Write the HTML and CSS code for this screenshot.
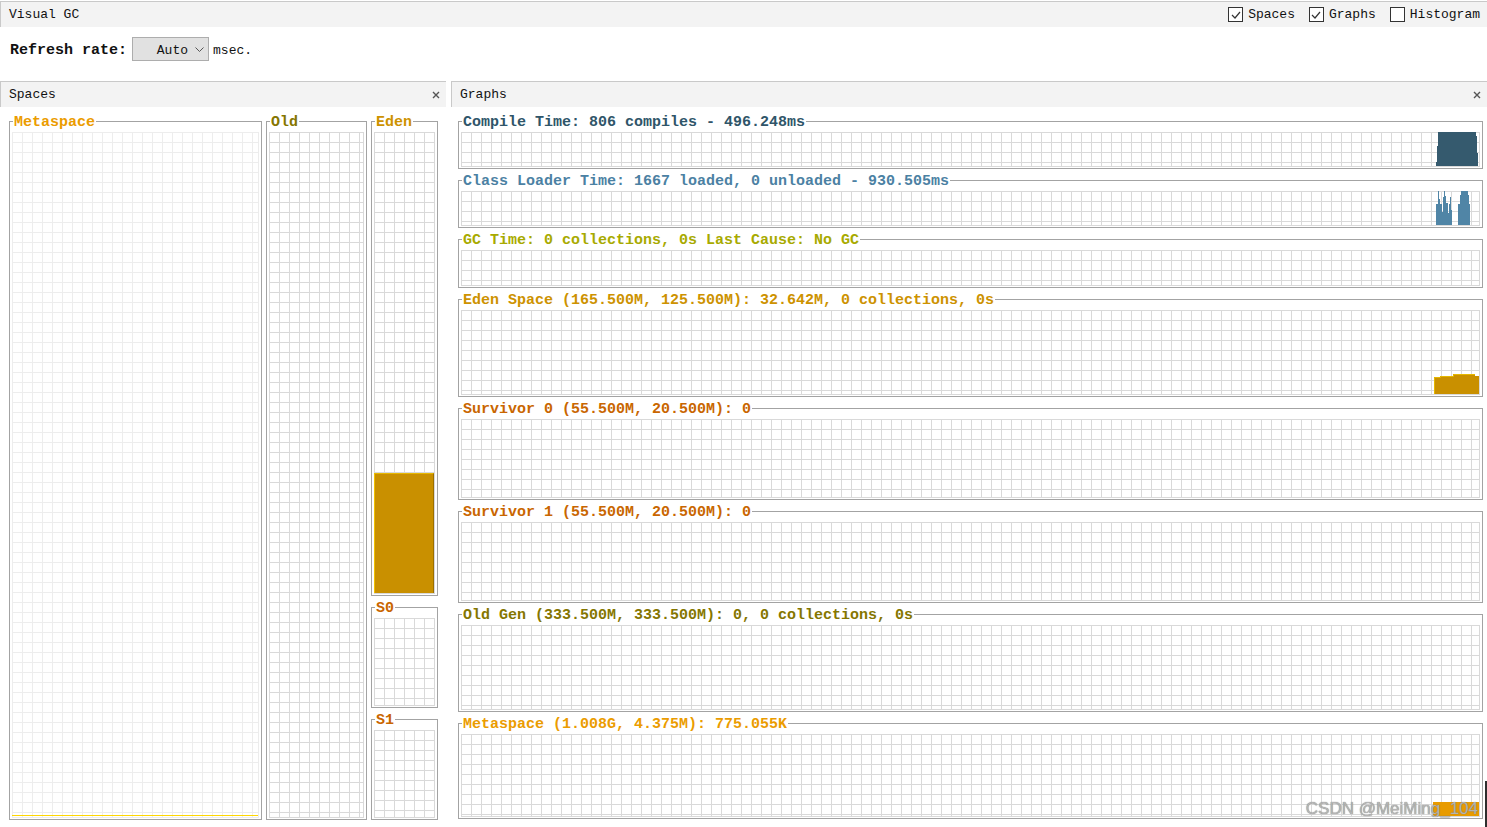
FILE: index.html
```html
<!DOCTYPE html>
<html>
<head>
<meta charset="utf-8">
<title>Visual GC</title>
<link rel="stylesheet" href="styles.css">
</head>
<body>
<div class="app">
  <div class="topbar">
    <span class="app-title">Visual GC</span>
    <div class="toggles">
      <label class="toggle"><span class="cb"><svg width="12" height="12" viewBox="0 0 12 12"><polyline points="2,6 5,9 10,3" fill="none" stroke="#333" stroke-width="1.2"/></svg></span>Spaces</label>
      <label class="toggle"><span class="cb"><svg width="12" height="12" viewBox="0 0 12 12"><polyline points="2,6 5,9 10,3" fill="none" stroke="#333" stroke-width="1.2"/></svg></span>Graphs</label>
      <label class="toggle"><span class="cb"></span>Histogram</label>
    </div>
  </div>

  <div class="toolbar">
    <span class="rate-label">Refresh rate:</span>
    <div class="select"><span>Auto</span><svg width="9" height="5" viewBox="0 0 9 5"><polyline points="0.5,0.5 4.5,4.5 8.5,0.5" fill="none" stroke="#555" stroke-width="1"/></svg></div>
    <span class="unit">msec.</span>
  </div>

  <div class="panels">
    <section class="panel spaces">
      <div class="panel-head"><span>Spaces</span><svg class="close" width="8" height="8" viewBox="0 0 8 8"><path d="M1 1L7 7M7 1L1 7" stroke="#555" stroke-width="1.4"/></svg></div>
      <div class="spaces-body">
        <fieldset class="grp sp-meta">
          <legend class="c-meta">Metaspace</legend>
          <div class="grid light fill-end"><div class="meta-line"></div></div>
        </fieldset>
        <fieldset class="grp sp-old">
          <legend class="c-old">Old</legend>
          <div class="grid"></div>
        </fieldset>
        <div class="young">
          <fieldset class="grp sp-eden">
            <legend class="c-eden">Eden</legend>
            <div class="grid fill-end"><div class="eden-fill"></div></div>
          </fieldset>
          <fieldset class="grp sp-surv">
            <legend class="c-surv">S0</legend>
            <div class="grid"></div>
          </fieldset>
          <fieldset class="grp sp-surv">
            <legend class="c-surv">S1</legend>
            <div class="grid"></div>
          </fieldset>
        </div>
      </div>
    </section>

    <section class="panel graphs">
      <div class="panel-head"><span>Graphs</span><svg class="close" width="8" height="8" viewBox="0 0 8 8"><path d="M1 1L7 7M7 1L1 7" stroke="#555" stroke-width="1.4"/></svg></div>
      <div class="graphs-body">
        <fieldset class="grp">
          <legend class="c-compile">Compile Time: 806 compiles - 496.248ms</legend>
          <div class="grid plot h35">
            <svg width="43" height="34" viewBox="0 0 43 34"><polygon fill="#355a6e" points="0,34 0,30 1,30 1,14 2,14 2,0 40,0 40,4 41,4 41,21 42,21 42,34"/></svg>
          </div>
        </fieldset>
        <fieldset class="grp">
          <legend class="c-class">Class Loader Time: 1667 loaded, 0 unloaded - 930.505ms</legend>
          <div class="grid plot h35">
            <svg width="43" height="34" viewBox="0 0 43 34"><polygon fill="#5085a6" points="0,34 0,13 2,13 2,0 3,0 3,8 4,8 4,13 6,13 6,21 7,21 7,6 8,6 8,0 9,0 9,5 10,5 10,12 12,12 12,22 13,22 13,13 14,13 14,6 15,6 15,19 16,19 16,34"/><polygon fill="#5085a6" points="22,34 22,13 24,13 24,4 25,4 25,0 32,0 32,4 33,4 33,13 34,13 34,34"/></svg>
          </div>
        </fieldset>
        <fieldset class="grp">
          <legend class="c-gc">GC Time: 0 collections, 0s Last Cause: No GC</legend>
          <div class="grid plot h36"></div>
        </fieldset>
        <fieldset class="grp">
          <legend class="c-eden">Eden Space (165.500M, 125.500M): 32.642M, 0 collections, 0s</legend>
          <div class="grid plot h85">
            <svg width="45" height="20" viewBox="0 0 45 20"><polygon fill="#c99000" points="0,20 0,3 6,3 6,2 19,2 19,0 41,0 41,2 45,2 45,20"/><polyline fill="none" stroke="#e6b800" stroke-width="1" points="0.5,20 0.5,3.5 6.5,3.5 6.5,2.5 19.5,2.5 19.5,0.5 41,0.5"/></svg>
          </div>
        </fieldset>
        <fieldset class="grp">
          <legend class="c-surv">Survivor 0 (55.500M, 20.500M): 0</legend>
          <div class="grid plot h79"></div>
        </fieldset>
        <fieldset class="grp">
          <legend class="c-surv">Survivor 1 (55.500M, 20.500M): 0</legend>
          <div class="grid plot h79"></div>
        </fieldset>
        <fieldset class="grp">
          <legend class="c-old">Old Gen (333.500M, 333.500M): 0, 0 collections, 0s</legend>
          <div class="grid plot h85"></div>
        </fieldset>
        <fieldset class="grp">
          <legend class="c-meta">Metaspace (1.008G, 4.375M): 775.055K</legend>
          <div class="grid plot h83">
            <svg width="46" height="14" viewBox="0 0 46 14"><rect x="0" y="0" width="46" height="14" fill="#e89b00"/></svg>
          </div>
        </fieldset>
      </div>
    </section>
  </div>

  <div class="watermark">CSDN @MeiMing_104</div>
  <div class="edge"></div>
</div>
</body>
</html>
```

FILE: styles.css
```css
* { box-sizing: border-box; }

html, body {
  margin: 0;
  padding: 0;
  background: #ffffff;
}

body {
  font-family: "Liberation Mono", "DejaVu Sans Mono", monospace;
  font-size: 13px;
  color: #111;
}

.app {
  position: relative;
  width: 1487px;
  height: 827px;
  overflow: hidden;
  padding-top: 1px;
  display: flex;
  flex-direction: column;
}

/* top bar */
.topbar {
  height: 26px;
  border-top: 1px solid #c9c9c9;
  border-left: 1px solid #c9c9c9;
  background: #f3f3f3;
  display: flex;
  align-items: center;
  justify-content: space-between;
  padding: 0 7px 0 8px;
}

.app-title { font-size: 13px; }

.toggles {
  display: flex;
  align-items: center;
  gap: 14px;
}

.toggle {
  display: flex;
  align-items: center;
  gap: 5px;
  font-size: 13px;
}

.cb {
  width: 15px;
  height: 15px;
  border: 1px solid #333;
  background: #fff;
  display: flex;
  align-items: center;
  justify-content: center;
}

/* toolbar */
.toolbar {
  height: 54px;
  display: flex;
  align-items: flex-start;
  padding: 10px 0 0 10px;
}

.rate-label {
  font-weight: bold;
  font-size: 15px;
  line-height: 28px;
  margin-right: 5px;
}

.select {
  width: 77px;
  height: 24px;
  background: #e1e1e1;
  border: 1px solid #adadad;
  display: flex;
  align-items: center;
  justify-content: flex-end;
  gap: 7px;
  padding-right: 4px;
  padding-top: 2px;
  font-size: 13px;
}

.select svg { margin-top: -2px; }

.unit {
  margin-left: 4px;
  font-size: 13px;
  line-height: 27px;
}

/* panels */
.panels {
  flex: 1;
  display: flex;
  gap: 5px;
  min-height: 0;
}

.panel {
  display: flex;
  flex-direction: column;
}

.spaces { width: 446px; }
.graphs { flex: 1; }

.panel-head {
  height: 26px;
  border-top: 1px solid #c9c9c9;
  border-left: 1px solid #c9c9c9;
  background: #f3f3f3;
  display: flex;
  align-items: center;
  justify-content: space-between;
  padding: 0 6px 0 8px;
  font-size: 13px;
}

.close { display: block; }

.spaces-body {
  flex: 1;
  display: flex;
  gap: 4px;
  padding: 6px 0 7px 9px;
  min-height: 0;
}

.graphs-body {
  flex: 1;
  display: flex;
  flex-direction: column;
  gap: 3px;
  padding: 6px 4px 0 7px;
}

/* group frames */
.grp {
  margin: 0;
  min-width: 0;
  border: 1px solid #a3a3a3;
  padding: 3px 2px 1px 2px;
  display: flex;
  flex-direction: column;
}

.grp legend {
  padding: 4px 1px 0 1px;
  margin-left: 1px;
  font-family: "Liberation Mono", "DejaVu Sans Mono", monospace;
  font-weight: bold;
  font-size: 15px;
  line-height: 12px;
}

.c-meta { color: #eb9c00; }
.c-old { color: #857600; }
.c-eden { color: #cd9200; }
.c-surv { color: #c96600; }
.c-compile { color: #2f5569; }
.c-class { color: #4b81a3; }
.c-gc { color: #a8aa00; }

/* grids */
.grid {
  flex: 1;
  border-right: 1px solid #d9d9d9;
  border-bottom: 1px solid #d9d9d9;
  background-color: #fff;
  background-image:
    linear-gradient(to right, #d9d9d9 1px, transparent 1px),
    linear-gradient(to bottom, #d9d9d9 1px, transparent 1px);
  background-size: 10px 10px;
}

.grid.light {
  border-right-color: #ececec;
  border-bottom-color: #ececec;
  background-image:
    linear-gradient(to right, #ededed 1px, transparent 1px),
    linear-gradient(to bottom, #ededed 1px, transparent 1px);
}

.fill-end {
  display: flex;
  flex-direction: column;
  justify-content: flex-end;
}

.meta-line {
  height: 1px;
  background: #ffd700;
  margin-bottom: 1px;
}

.sp-meta { width: 253px; }
.sp-old { width: 101px; }

.young {
  width: 67px;
  display: flex;
  flex-direction: column;
  gap: 3px;
}

.sp-eden { flex: 1; }
.sp-surv { flex: none; }
.sp-surv .grid { flex: none; height: 88px; }

.eden-fill {
  height: 120px;
  background: #c99000;
  border-left: 1px solid #f2c200;
  border-top: 1px solid #e9b800;
  border-right: 1px solid #9c7000;
}

.plot {
  flex: none;
  display: flex;
  justify-content: flex-end;
  align-items: flex-end;
}

.plot svg { display: block; }

.h35 { height: 35px; }
.h36 { height: 36px; }
.h79 { height: 79px; }
.h83 { height: 83px; }
.h85 { height: 85px; }

/* overlays */
.watermark {
  position: absolute;
  right: 9px;
  bottom: 8px;
  font-family: "Liberation Sans", Arial, sans-serif;
  font-size: 17px;
  line-height: 20px;
  color: rgba(185, 185, 185, 0.95);
  text-shadow: 0 0 1px #6a6a6a;
}

.edge {
  position: absolute;
  right: 0;
  bottom: 0;
  width: 2px;
  height: 46px;
  background: #2e2e2e;
}
```
